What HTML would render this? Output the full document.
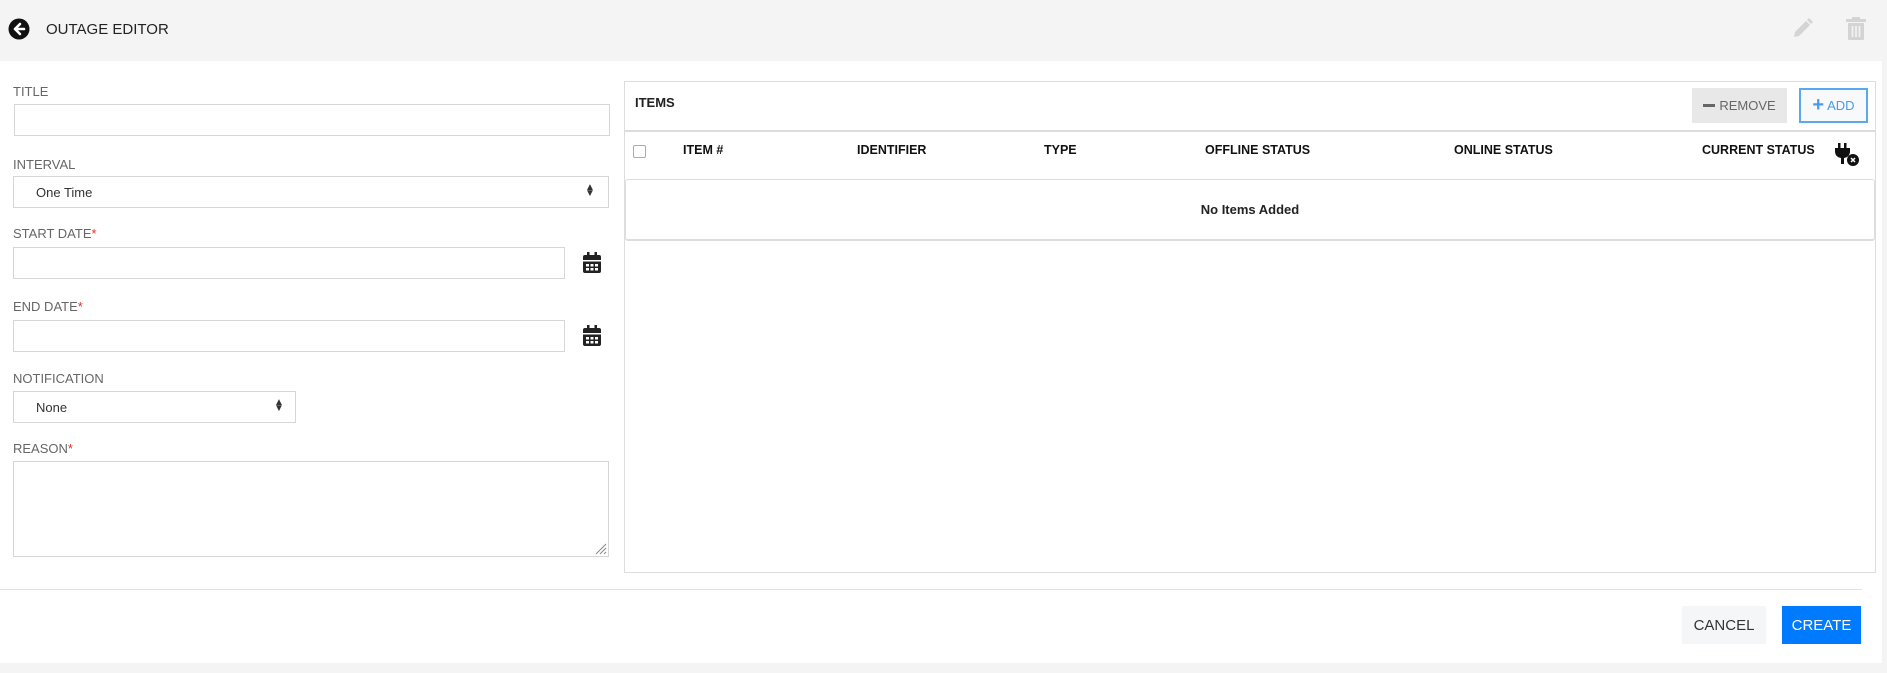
<!DOCTYPE html>
<html><head><meta charset="utf-8"><style>
*{box-sizing:border-box;margin:0;padding:0}
body{width:1887px;height:673px;background:#f4f4f4;font-family:"Liberation Sans",sans-serif;position:relative;overflow:hidden;color:#222}
.a{position:absolute}
.hdr{left:0;top:0;width:1887px;height:61px;background:#f4f4f4}
.main{left:0;top:61px;width:1882px;height:602px;background:#fff}
.lbl{font-size:13px;color:#666;left:13px}
.lbl b{color:#d9302c;font-weight:normal}
.inp{border:1px solid #d6d6d6;background:#fff}
.sel{font-size:13px;color:#333;padding-left:22px;display:flex;align-items:center}
.th{font-size:12.5px;font-weight:bold;top:143px;color:#111}
.btn{display:flex;align-items:center;justify-content:center;font-size:13px}
</style></head><body>
<div class="a hdr"></div>
<svg class="a" style="left:8px;top:18px" width="22" height="22" viewBox="0 0 22 22"><circle cx="11" cy="11" r="10.5" fill="#111"/><path d="M12 6 L7 11 L12 16 M7 11 H16" stroke="#fff" stroke-width="2.6" fill="none" stroke-linecap="round" stroke-linejoin="round"/></svg>
<div class="a" style="left:46px;top:21px;font-size:15px;color:#222">OUTAGE EDITOR</div>
<svg class="a" style="left:1792px;top:17px" width="22" height="22" viewBox="0 0 22 22"><path d="M2 20 L3 15 L14 4 L18 8 L7 19 Z M15 3 L17 1 L21 5 L19 7 Z" fill="#d4d4d4"/></svg>
<svg class="a" style="left:1845px;top:17px" width="22" height="24" viewBox="0 0 22 24"><rect x="1" y="2" width="20" height="3" fill="#d4d4d4"/><rect x="7" y="0" width="8" height="3" fill="#d4d4d4"/><path d="M3 6 H19 V22 Q19 23 18 23 H4 Q3 23 3 22 Z" fill="#d4d4d4"/><path d="M7.5 9 V20 M11 9 V20 M14.5 9 V20" stroke="#f4f4f4" stroke-width="1.6"/></svg>
<div class="a main"></div>

<div class="a lbl" style="top:84px">TITLE</div>
<div class="a inp" style="left:14px;top:104px;width:596px;height:32px"></div>
<div class="a lbl" style="top:157px">INTERVAL</div>
<div class="a inp sel" style="left:13px;top:176px;width:596px;height:32px">One Time</div>
<div class="a" style="left:585px;top:185px;font-size:10px;line-height:6px;color:#333">▲<br>▼</div>
<div class="a lbl" style="top:226px">START DATE<b>*</b></div>
<div class="a inp" style="left:13px;top:247px;width:552px;height:32px"></div>
<div class="a lbl" style="top:299px">END DATE<b>*</b></div>
<div class="a inp" style="left:13px;top:320px;width:552px;height:32px"></div>
<div class="a lbl" style="top:371px">NOTIFICATION</div>
<div class="a inp sel" style="left:13px;top:391px;width:283px;height:32px">None</div>
<div class="a" style="left:274px;top:400px;font-size:10px;line-height:6px;color:#333">▲<br>▼</div>
<div class="a lbl" style="top:441px">REASON<b>*</b></div>
<div class="a inp" style="left:13px;top:461px;width:596px;height:96px"></div>
<svg class="a" style="left:593px;top:541px" width="14" height="14"><path d="M13 3 L3 13 M13 7 L7 13 M13 11 L11 13" stroke="#888" stroke-width="1"/></svg>

<svg class="a" style="left:582px;top:252px" width="20" height="22" viewBox="0 0 20 22"><path d="M1 5 Q1 3 3 3 H17 Q19 3 19 5 V8 H1 Z M1 9.5 H19 V19 Q19 21 17 21 H3 Q1 21 1 19 Z" fill="#222"/><rect x="5" y="0" width="2.5" height="5" fill="#222"/><rect x="12.5" y="0" width="2.5" height="5" fill="#222"/><g fill="#fff"><rect x="4" y="12" width="3" height="2.5"/><rect x="8.5" y="12" width="3" height="2.5"/><rect x="13" y="12" width="3" height="2.5"/><rect x="4" y="16" width="3" height="2.5"/><rect x="8.5" y="16" width="3" height="2.5"/><rect x="13" y="16" width="3" height="2.5"/></g></svg>
<svg class="a" style="left:582px;top:325px" width="20" height="22" viewBox="0 0 20 22"><path d="M1 5 Q1 3 3 3 H17 Q19 3 19 5 V8 H1 Z M1 9.5 H19 V19 Q19 21 17 21 H3 Q1 21 1 19 Z" fill="#222"/><rect x="5" y="0" width="2.5" height="5" fill="#222"/><rect x="12.5" y="0" width="2.5" height="5" fill="#222"/><g fill="#fff"><rect x="4" y="12" width="3" height="2.5"/><rect x="8.5" y="12" width="3" height="2.5"/><rect x="13" y="12" width="3" height="2.5"/><rect x="4" y="16" width="3" height="2.5"/><rect x="8.5" y="16" width="3" height="2.5"/><rect x="13" y="16" width="3" height="2.5"/></g></svg>

<div class="a" style="left:624px;top:81px;width:1252px;height:492px;border:1px solid #ddd"></div>
<div class="a" style="left:625px;top:130px;width:1250px;height:2px;background:#dcdcdc"></div>
<div class="a" style="left:635px;top:95px;font-size:13px;font-weight:bold">ITEMS</div>
<div class="a btn" style="left:1692px;top:88px;width:95px;height:35px;background:#e8e8e8;color:#666"><span style="display:inline-block;width:12px;height:3px;background:#666;margin-right:4px"></span>REMOVE</div>
<div class="a btn" style="left:1799px;top:88px;width:69px;height:35px;border:2px solid #5aa8ee;background:#f7f9fb;color:#4a9ce8"><span style="font-size:20px;font-weight:bold;margin-right:3px;line-height:13px">+</span>ADD</div>

<div class="a" style="left:633px;top:145px;width:13px;height:13px;border:1px solid #aaa;border-radius:2px"></div>
<div class="a th" style="left:683px">ITEM #</div>
<div class="a th" style="left:857px">IDENTIFIER</div>
<div class="a th" style="left:1044px">TYPE</div>
<div class="a th" style="left:1205px">OFFLINE STATUS</div>
<div class="a th" style="left:1454px">ONLINE STATUS</div>
<div class="a th" style="left:1702px">CURRENT STATUS</div>
<svg class="a" style="left:1835px;top:143px" width="26" height="24" viewBox="0 0 26 24"><rect x="3" y="0" width="2.5" height="6" fill="#111"/><rect x="9" y="0" width="2.5" height="6" fill="#111"/><path d="M0 5 H15 V8 Q15 14 9 15 V21 H6 V15 Q0 14 0 8 Z" fill="#111"/><circle cx="18" cy="17" r="6" fill="#111"/><path d="M16 15 L20 19 M20 15 L16 19" stroke="#fff" stroke-width="1.5"/></svg>
<div class="a" style="left:625px;top:179px;width:1250px;height:62px;border:1px solid #ddd;border-bottom:2px solid #ddd;border-radius:3px;display:flex;align-items:center;justify-content:center;font-size:13px;font-weight:bold">No Items Added</div>

<div class="a" style="left:0;top:589px;width:1862px;height:1px;background:#e2e2e2"></div>
<div class="a btn" style="left:1682px;top:606px;width:84px;height:38px;background:#f5f6f8;color:#333;font-size:15px">CANCEL</div>
<div class="a btn" style="left:1782px;top:606px;width:79px;height:38px;background:#007bff;color:#fff;font-size:15px">CREATE</div>
</body></html>
